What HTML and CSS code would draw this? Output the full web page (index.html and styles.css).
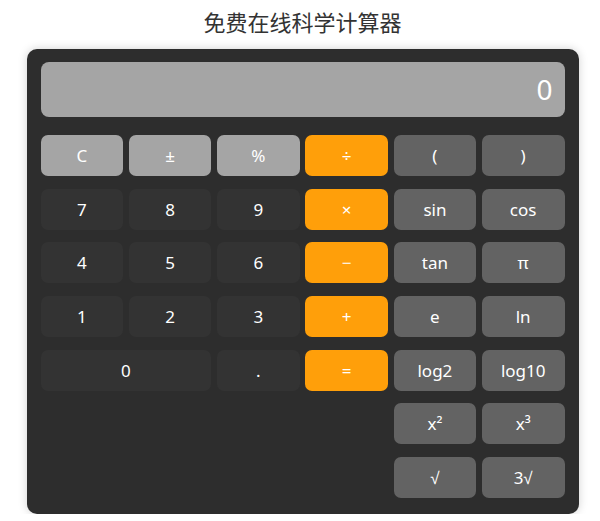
FILE: index.html
```html
<!DOCTYPE html>
<html lang="zh">
<head>
<meta charset="utf-8">
<title>免费在线科学计算器</title>
<link rel="stylesheet" href="styles.css">
</head>
<body>
<div class="page">
  <h1 class="title">免费在线科学计算器</h1>
  <div class="calc">
    <div class="display">0</div>
    <div class="keys">
      <button class="key light">C</button>
      <button class="key light">±</button>
      <button class="key light">%</button>
      <button class="key op">÷</button>
      <button class="key fn">(</button>
      <button class="key fn">)</button>

      <button class="key num">7</button>
      <button class="key num">8</button>
      <button class="key num">9</button>
      <button class="key op">×</button>
      <button class="key fn">sin</button>
      <button class="key fn">cos</button>

      <button class="key num">4</button>
      <button class="key num">5</button>
      <button class="key num">6</button>
      <button class="key op">−</button>
      <button class="key fn">tan</button>
      <button class="key fn">π</button>

      <button class="key num">1</button>
      <button class="key num">2</button>
      <button class="key num">3</button>
      <button class="key op">+</button>
      <button class="key fn">e</button>
      <button class="key fn">ln</button>

      <button class="key num wide">0</button>
      <button class="key num">.</button>
      <button class="key op">=</button>
      <button class="key fn">log2</button>
      <button class="key fn">log10</button>

      <button class="key fn c5">x²</button>
      <button class="key fn">x³</button>

      <button class="key fn c5">√</button>
      <button class="key fn">3√</button>
    </div>
  </div>
</div>
</body>
</html>
```

FILE: styles.css
```css
* { box-sizing: border-box; }
html, body { margin: 0; padding: 0; background: #ffffff; }
body {
  font-family: "Noto Sans", "Noto Sans CJK SC", sans-serif;
}
.page {
  padding: 0 0 0 5px;
  display: flex;
  flex-direction: column;
  align-items: center;
}
.title {
  margin: 6px 0 0 0;
  height: 43px;
  font-family: "Noto Sans CJK SC", sans-serif;
  font-size: 22px;
  font-weight: 400;
  line-height: 30px;
  color: #333333;
}
.calc {
  width: 552px;
  background: #2d2d2d;
  border-radius: 10px;
  padding: 13px 14px 16px 14px;
  box-shadow: 0 0 10px rgba(0, 0, 0, 0.18);
}
.display {
  height: 55px;
  background: #a5a5a5;
  border-radius: 8px;
  color: #ffffff;
  font-size: 28px;
  line-height: 55px;
  text-align: right;
  padding-right: 12px;
  margin-bottom: 18px;
}
.keys {
  display: grid;
  grid-template-columns: repeat(6, 1fr);
  grid-auto-rows: 41px;
  column-gap: 5.6px;
  row-gap: 12.7px;
}
.key {
  border: none;
  border-radius: 7px;
  color: #ffffff;
  font-family: "Noto Sans", sans-serif;
  font-size: 17px;
  padding: 0;
  margin: 0;
}
.light { background: #a5a5a5; }
.num { background: #333333; }
.op { background: #ff9f0a; }
.fn { background: #636363; }
.wide { grid-column: span 2; }
.c5 { grid-column: 5; }
```
